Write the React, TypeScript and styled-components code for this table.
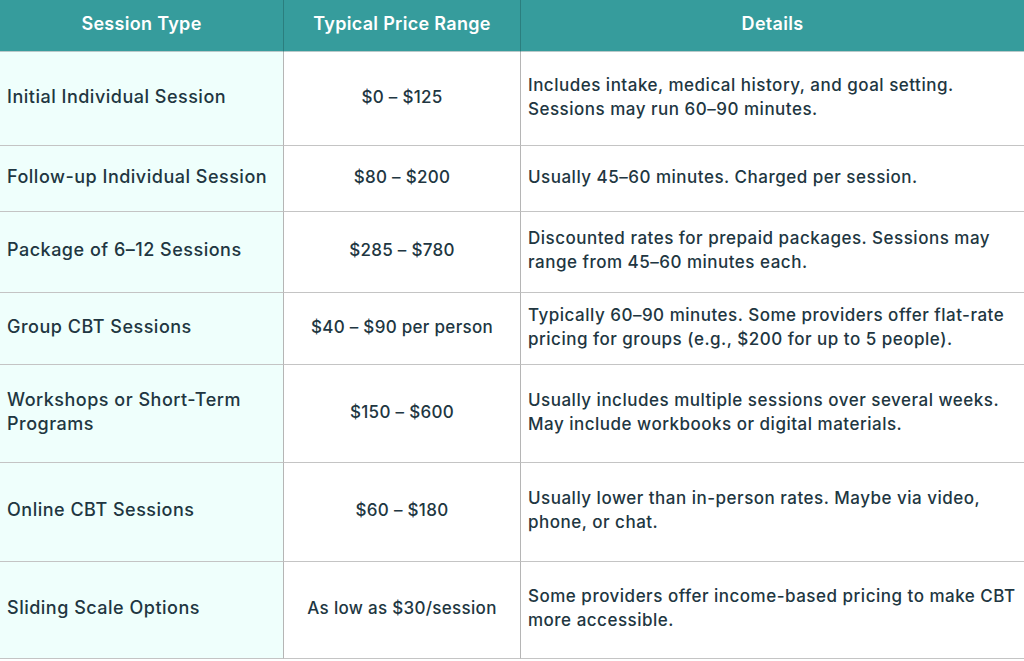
import React from "react";
import styled, { createGlobalStyle } from "styled-components";

const Global = createGlobalStyle`
  html, body { margin: 0; padding: 0; background: #ffffff; }
  body { font-family: "Inter", "Noto Sans", sans-serif; }
`;

const Table = styled.div`
  display: grid;
  grid-template-columns: 284px 237px 503px;
  width: 1024px;
`;

const HeadCell = styled.div<{ $last?: boolean }>`
  height: 52px;
  box-sizing: border-box;
  background: #369c9c;
  color: #ffffff;
  font-size: 18px;
  font-weight: 600;
  letter-spacing: 0.3px;
  display: flex;
  align-items: center;
  justify-content: center;
  padding-bottom: 4px;
  border-right: ${(p) => (p.$last ? "none" : "1px solid #2b7e7e")};
  border-bottom: 1px solid #b9c9c9;
`;

const Cell = styled.div<{ $h: number; $kind: "type" | "price" | "details" }>`
  height: ${(p) => p.$h}px;
  box-sizing: border-box;
  display: flex;
  align-items: center;
  justify-content: ${(p) => (p.$kind === "price" ? "center" : "flex-start")};
  text-align: ${(p) => (p.$kind === "price" ? "center" : "left")};
  padding: 0 7px 4px;
  background: ${(p) => (p.$kind === "type" ? "#effffc" : "#ffffff")};
  color: #213641;
  font-size: ${(p) => (p.$kind === "type" ? 18 : 17)}px;
  font-weight: 500;
  letter-spacing: ${(p) => (p.$kind === "price" ? 0.3 : 0.5)}px;
  line-height: 24px;
  border-right: ${(p) => (p.$kind === "details" ? "none" : "1px solid #b5b5b5")};
  border-bottom: 1px solid #c4c4c4;
`;

const rows = [
  { h: 94, type: "Initial Individual Session", price: "$0 – $125", details: "Includes intake, medical history, and goal setting. Sessions may run 60–90 minutes." },
  { h: 66, type: "Follow-up Individual Session", price: "$80 – $200", details: "Usually 45–60 minutes. Charged per session." },
  { h: 81, type: "Package of 6–12 Sessions", price: "$285 – $780", details: "Discounted rates for prepaid packages. Sessions may range from 45–60 minutes each." },
  { h: 72, type: "Group CBT Sessions", price: "$40 – $90 per person", details: "Typically 60–90 minutes. Some providers offer flat-rate pricing for groups (e.g., $200 for up to 5 people)." },
  { h: 98, type: "Workshops or Short-Term Programs", price: "$150 – $600", details: "Usually includes multiple sessions over several weeks. May include workbooks or digital materials." },
  { h: 99, type: "Online CBT Sessions", price: "$60 – $180", details: "Usually lower than in-person rates. Maybe via video, phone, or chat." },
  { h: 97, type: "Sliding Scale Options", price: "As low as $30/session", details: "Some providers offer income-based pricing to make CBT more accessible." },
];

export default function App() {
  return (
    <>
      <Global />
      <Table>
        <HeadCell>Session Type</HeadCell>
        <HeadCell>Typical Price Range</HeadCell>
        <HeadCell $last>Details</HeadCell>
        {rows.map((r, i) => (
          <React.Fragment key={i}>
            <Cell $h={r.h} $kind="type">{r.type}</Cell>
            <Cell $h={r.h} $kind="price">{r.price}</Cell>
            <Cell $h={r.h} $kind="details">{r.details}</Cell>
          </React.Fragment>
        ))}
      </Table>
    </>
  );
}
